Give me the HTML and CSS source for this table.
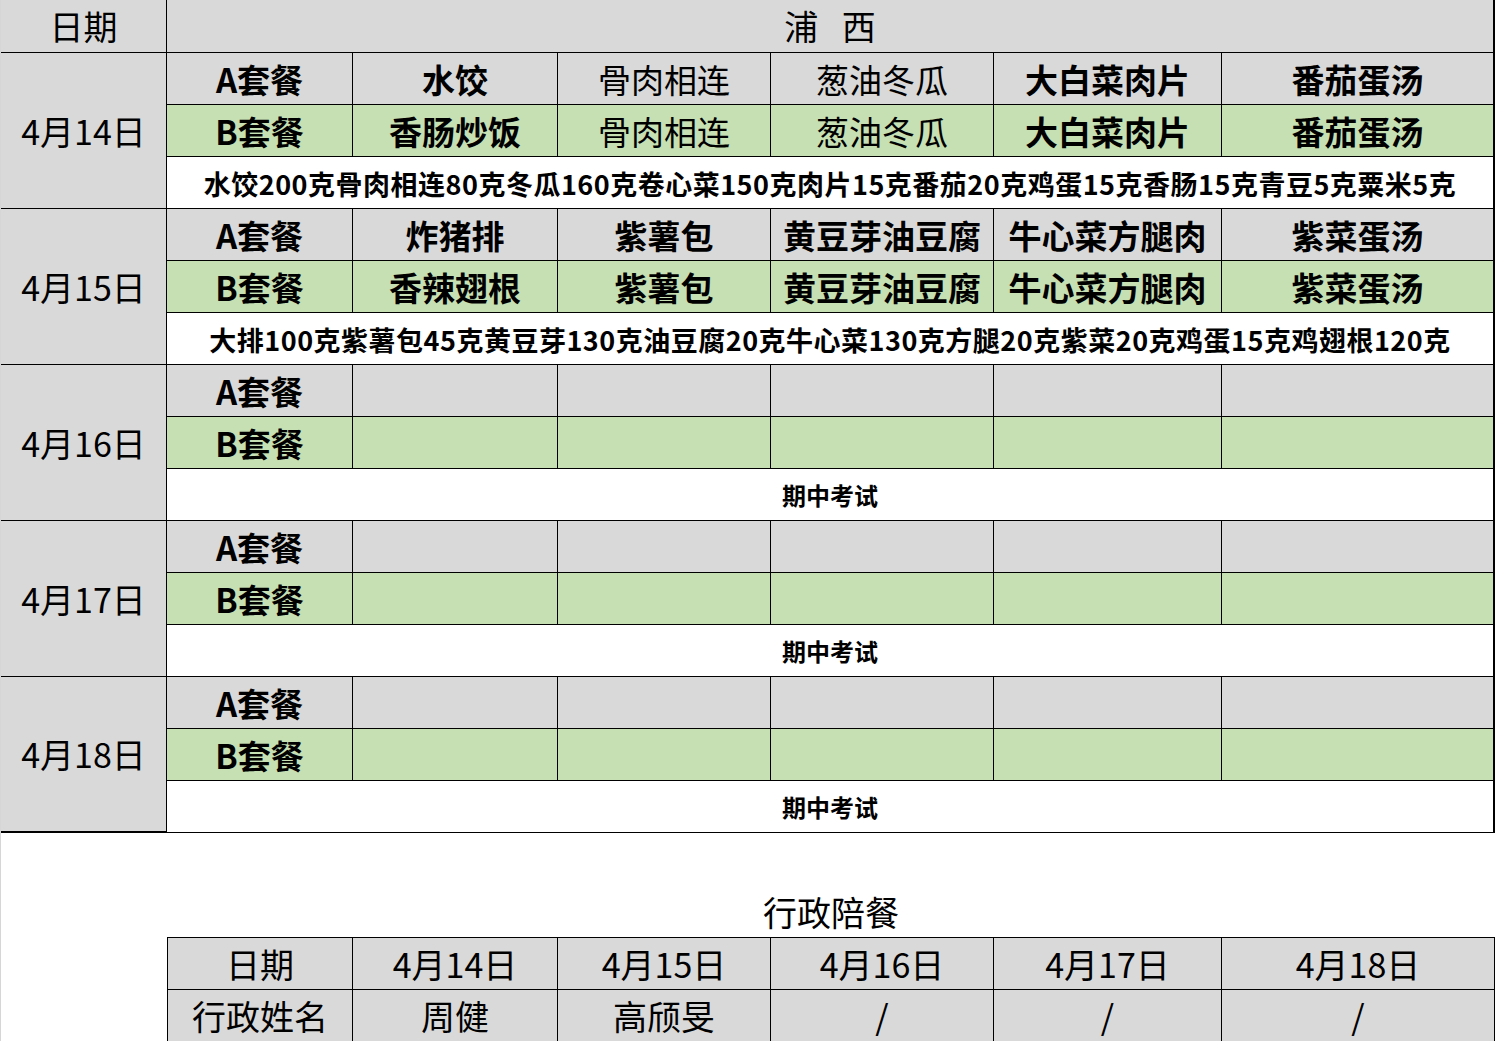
FILE: index.html
```html
<!DOCTYPE html>
<html lang="zh">
<head>
<meta charset="utf-8">
<title>菜单</title>
<link rel="stylesheet" href="styles.css">
</head>
<body>
<div class="page">
  <div class="sheet">
    <div class="c hd date-col">日期</div>
    <div class="c hd span6 last title">浦 西</div>

    <div class="c date-col date">4月14日</div>
    <div class="c g b">A套餐</div>
    <div class="c g b">水饺</div>
    <div class="c g">骨肉相连</div>
    <div class="c g">葱油冬瓜</div>
    <div class="c g b">大白菜肉片</div>
    <div class="c g b last">番茄蛋汤</div>
    <div class="c gr b">B套餐</div>
    <div class="c gr b">香肠炒饭</div>
    <div class="c gr">骨肉相连</div>
    <div class="c gr">葱油冬瓜</div>
    <div class="c gr b">大白菜肉片</div>
    <div class="c gr b last">番茄蛋汤</div>
    <div class="c w note span6 last">水饺200克骨肉相连80克冬瓜160克卷心菜150克肉片15克番茄20克鸡蛋15克香肠15克青豆5克粟米5克</div>

    <div class="c date-col date">4月15日</div>
    <div class="c g b">A套餐</div>
    <div class="c g b">炸猪排</div>
    <div class="c g b">紫薯包</div>
    <div class="c g b">黄豆芽油豆腐</div>
    <div class="c g b">牛心菜方腿肉</div>
    <div class="c g b last">紫菜蛋汤</div>
    <div class="c gr b">B套餐</div>
    <div class="c gr b">香辣翅根</div>
    <div class="c gr b">紫薯包</div>
    <div class="c gr b">黄豆芽油豆腐</div>
    <div class="c gr b">牛心菜方腿肉</div>
    <div class="c gr b last">紫菜蛋汤</div>
    <div class="c w note span6 last">大排100克紫薯包45克黄豆芽130克油豆腐20克牛心菜130克方腿20克紫菜20克鸡蛋15克鸡翅根120克</div>

    <div class="c date-col date">4月16日</div>
    <div class="c g b">A套餐</div>
    <div class="c g"></div><div class="c g"></div><div class="c g"></div><div class="c g"></div><div class="c g last"></div>
    <div class="c gr b">B套餐</div>
    <div class="c gr"></div><div class="c gr"></div><div class="c gr"></div><div class="c gr"></div><div class="c gr last"></div>
    <div class="c w exam span6 last">期中考试</div>

    <div class="c date-col date">4月17日</div>
    <div class="c g b">A套餐</div>
    <div class="c g"></div><div class="c g"></div><div class="c g"></div><div class="c g"></div><div class="c g last"></div>
    <div class="c gr b">B套餐</div>
    <div class="c gr"></div><div class="c gr"></div><div class="c gr"></div><div class="c gr"></div><div class="c gr last"></div>
    <div class="c w exam span6 last">期中考试</div>

    <div class="c date-col date final">4月18日</div>
    <div class="c g b">A套餐</div>
    <div class="c g"></div><div class="c g"></div><div class="c g"></div><div class="c g"></div><div class="c g last"></div>
    <div class="c gr b">B套餐</div>
    <div class="c gr"></div><div class="c gr"></div><div class="c gr"></div><div class="c gr"></div><div class="c gr last"></div>
    <div class="c w exam span6 last">期中考试</div>
  </div>

  <div class="lower">
    <div class="spacer"></div>
    <div class="caption">行政陪餐</div>
    <div class="duty">
      <div class="d first">日期</div>
      <div class="d">4月14日</div>
      <div class="d">4月15日</div>
      <div class="d">4月16日</div>
      <div class="d">4月17日</div>
      <div class="d">4月18日</div>
      <div class="d first">行政姓名</div>
      <div class="d">周健</div>
      <div class="d">高颀旻</div>
      <div class="d">/</div>
      <div class="d">/</div>
      <div class="d">/</div>
    </div>
  </div>
</div>
</body>
</html>
```

FILE: styles.css
```css
* { box-sizing: border-box; }
html, body { margin: 0; padding: 0; background: #fff; }
body {
  font-family: "Noto Sans CJK SC", "Noto Sans", sans-serif;
  color: #000;
}
.page {
  width: 1495px;
  height: 1041px;
  border-left: 1px solid #d6d6d6;
  overflow: hidden;
}
.sheet {
  display: grid;
  grid-template-columns: 166px 186px 205px 213px 223px 228px 273px;
  grid-template-rows: 53px;
  grid-auto-rows: 52px;
}
.c {
  display: flex;
  align-items: center;
  justify-content: center;
  border-right: 1px solid #000;
  border-bottom: 1px solid #000;
  font-size: 33px;
  line-height: 1;
  white-space: nowrap;
  padding-top: 1px;
}
.hd { background: #d9d9d9; font-size: 34px; padding-top: 0; }
.title { word-spacing: 16px; }
.date-col { background: #d9d9d9; }
.date { grid-row: span 3; font-size: 34px; padding-top: 0; }
.final { border-bottom: 2px solid #000; }
.span6 { grid-column: span 6; }
.last { border-right: 2px solid #000; }
.g { background: #d9d9d9; }
.gr { background: #c6e0b4; }
.w { background: #fff; }
.b { font-weight: 700; }
.note { font-size: 27px; font-weight: 700; letter-spacing: 0.5px; padding-top: 2px; }
.exam { font-size: 24px; font-weight: 700; padding-top: 0; }

.lower {
  display: grid;
  grid-template-rows: 52px 52px auto;
}
.caption {
  margin-left: 166px;
  height: 52px;
  display: flex;
  align-items: center;
  justify-content: center;
  font-size: 34px;
  padding-top: 0;
}
.duty {
  margin-left: 166px;
  display: grid;
  grid-template-columns: 186px 205px 213px 223px 228px 273px;
  grid-auto-rows: 52px;
  border-top: 1px solid #000;
}
.d {
  background: #d9d9d9;
  border-right: 1px solid #000;
  border-bottom: 1px solid #000;
  display: flex;
  align-items: center;
  justify-content: center;
  font-size: 34px;
  line-height: 1;
  padding-top: 0;
}
.d.first { border-left: 1px solid #000; }
```
